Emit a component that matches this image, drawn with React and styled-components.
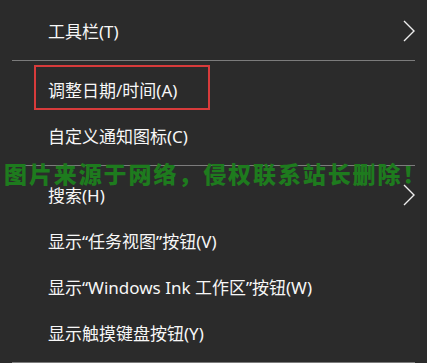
import React from "react";
import styled, { createGlobalStyle } from "styled-components";

const GlobalStyle = createGlobalStyle`
  html, body {
    margin: 0;
    padding: 0;
    background: #2b2b2b;
  }
`;

const Menu = styled.div`
  position: relative;
  width: 427px;
  height: 363px;
  overflow: hidden;
  box-sizing: border-box;
  padding-top: 8px;
  background: #2b2b2b;
  font-family: "Noto Sans", "Noto Sans CJK SC", sans-serif;
  font-size: 17px;
  color: #f7f7f7;
`;

const Item = styled.div`
  position: relative;
  height: 46px;
  display: flex;
  align-items: center;
  justify-content: space-between;
  padding: 0 12px 0 48px;
  box-sizing: border-box;
  white-space: nowrap;
  line-height: 1;

  ${(p) =>
    p.$marked &&
    `
    &::after {
      content: "";
      position: absolute;
      left: 34px;
      top: -2px;
      width: 176px;
      height: 45px;
      box-sizing: border-box;
      border: 2px solid #d83b3b;
      pointer-events: none;
    }
  `}
`;

const Label = styled.span`
  display: block;
`;

const Separator = styled.div`
  height: 1px;
  margin: 6px 12px;
  background: #7c7c7c;
`;

const Watermark = styled.div`
  position: absolute;
  left: 4px;
  top: 159px;
  font-family: "Noto Sans CJK SC", sans-serif;
  font-weight: 900;
  font-size: 23px;
  letter-spacing: 1.9px;
  line-height: 28px;
  color: #1e7b1e;
  white-space: nowrap;
  pointer-events: none;
`;

const Chevron = () => (
  <svg width="12" height="22" viewBox="0 0 12 22" aria-hidden="true">
    <polyline
      points="1,1 11,11 1,21"
      fill="none"
      stroke="#eeeeee"
      strokeWidth="1.4"
    />
  </svg>
);

const groups = [
  [{ label: "工具栏(T)", sub: true }],
  [
    { label: "调整日期/时间(A)", marked: true },
    { label: "自定义通知图标(C)" },
  ],
  [
    { label: "搜索(H)", sub: true },
    { label: "显示“任务视图”按钮(V)" },
    { label: "显示“Windows Ink 工作区”按钮(W)" },
    { label: "显示触摸键盘按钮(Y)" },
  ],
];

export default function App() {
  return (
    <>
      <GlobalStyle />
      <Menu>
        {groups.map((g, gi) => (
          <React.Fragment key={gi}>
            {g.map((it) => (
              <Item key={it.label} $marked={it.marked}>
                <Label>{it.label}</Label>
                {it.sub && <Chevron />}
              </Item>
            ))}
            <Separator />
          </React.Fragment>
        ))}
        <Watermark>图片来源于网络，侵权联系站长删除！</Watermark>
      </Menu>
    </>
  );
}
